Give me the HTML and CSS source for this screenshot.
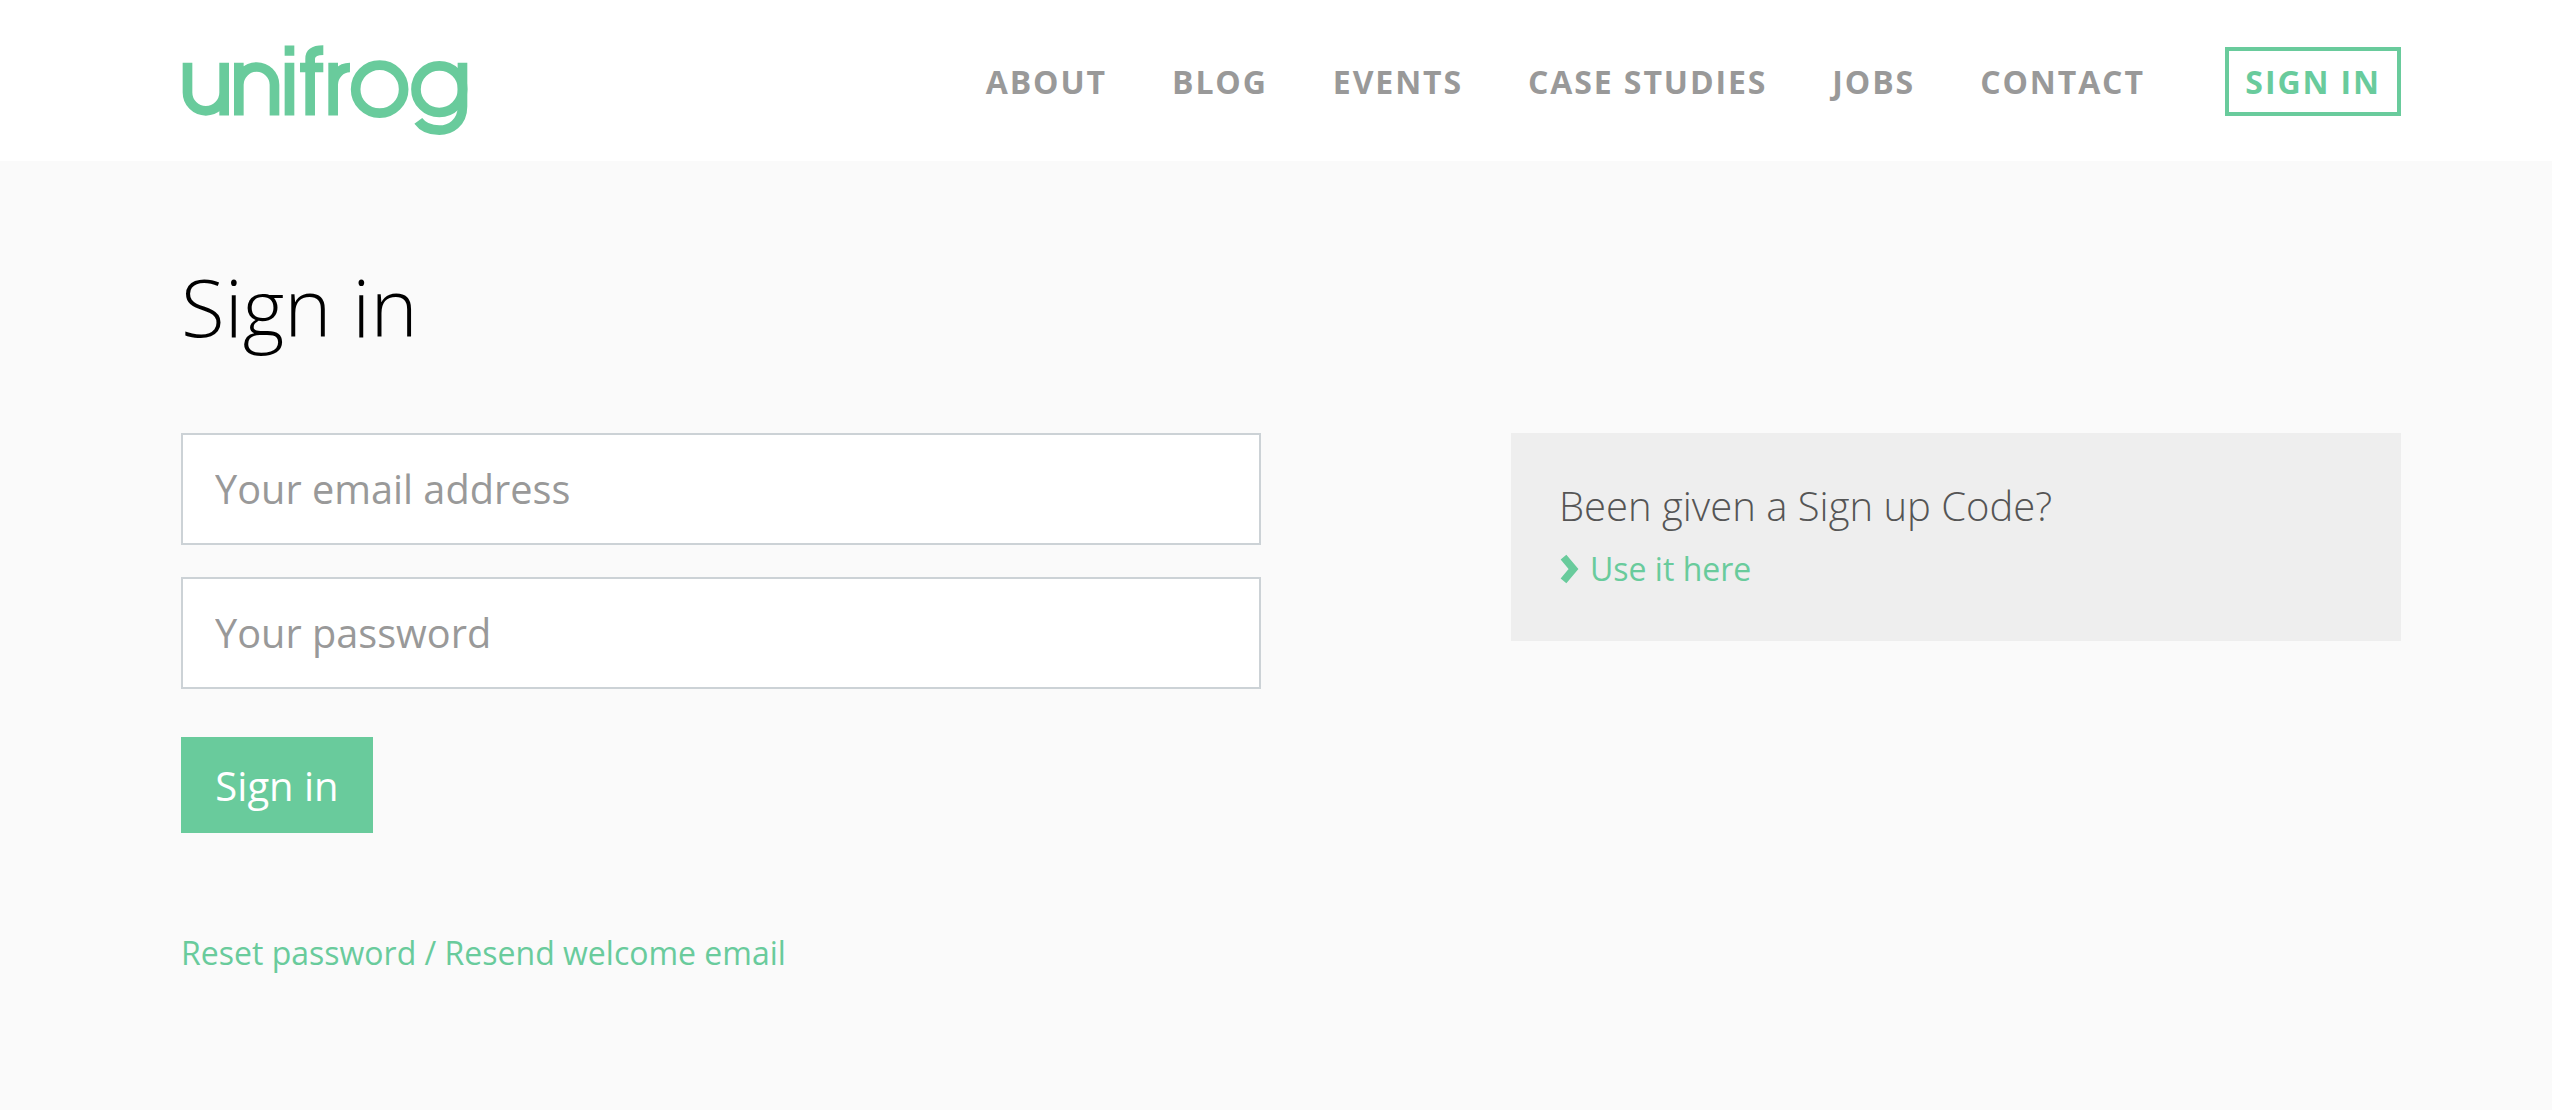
FILE: index.html
```html
<!DOCTYPE html>
<html lang="en">
<head>
<meta charset="utf-8">
<title>Sign in - Unifrog</title>
<link rel="stylesheet" href="styles.css">
</head>
<body>
<header class="site-header">
  <div class="wrap header-row">
    <a class="logo" href="#" aria-label="unifrog">
      <svg class="logo-svg" viewBox="0 0 300 100" role="img" aria-hidden="true">
        <g transform="translate(-21 -12.5) scale(.3333)" class="logo-strokes">
          <path d="M82.5 124V213A55 55 0 0 0 192.500 213M192.500 124V282"/>
          <path d="M236.500 282V124M236.500 190A53.500 53.500 0 0 1 343.500 190V282"/>
          <path d="M388.500 124V282M388.500 72V103"/>
          <path d="M450.500 282V112Q450.500 86 490 86M420 138H490"/>
          <path d="M519.500 282V124M519.500 190A50 52 0 0 1 570 138"/>
          <circle cx="659" cy="203" r="72"/>
          <circle cx="838" cy="203" r="70"/>
          <path d="M907.500 124V255C907.500 305 870 326 838 326C810 326 788 316 775 298"/>
        </g>
      </svg>
    </a>
    <nav class="nav">
      <a class="nav-link" href="#">About</a>
      <a class="nav-link" href="#">Blog</a>
      <a class="nav-link" href="#">Events</a>
      <a class="nav-link" href="#">Case Studies</a>
      <a class="nav-link" href="#">Jobs</a>
      <a class="nav-link" href="#">Contact</a>
      <a class="nav-cta" href="#">Sign in</a>
    </nav>
  </div>
</header>
<main class="wrap main">
  <h1 class="title">Sign in</h1>
  <div class="columns">
    <form class="form">
      <input class="field" type="email" placeholder="Your email address">
      <input class="field" type="password" placeholder="Your password">
      <button class="btn" type="button">Sign in</button>
      <p class="reset"><a href="#">Reset password / Resend welcome email</a></p>
    </form>
    <aside class="panel">
      <h2 class="panel-title">Been given a Sign up Code?</h2>
      <a class="panel-link" href="#">
        <svg class="chev" viewBox="0 0 20 32" aria-hidden="true"><path d="M4.500 4.200L14.500 16L4.500 27.800"/></svg>
        Use it here
      </a>
    </aside>
  </div>
</main>
</body>
</html>
```
FILE: styles.css
```css
* { box-sizing: border-box; }
html, body { margin: 0; }
body {
  background: #fafafa;
  font-family: "Open Sans", "Noto Sans", sans-serif;
  min-height: 1110px;
}
a { text-decoration: none; }
.wrap { width: 2220px; margin-left: 181px; }
.site-header { background: #fff; height: 161px; }
.header-row { display: flex; align-items: center; justify-content: space-between; height: 161px; }
.logo { display: block; width: 300px; height: 100px; margin-top: 6px; }
.logo-svg { display: block; width: 300px; height: 100px; overflow: visible; }
.logo-strokes { fill: none; stroke: #69cb9c; stroke-width: 29; }
.nav { display: flex; align-items: center; margin-top: 2px; }
.nav-link {
  color: #999;
  font-size: 32px;
  font-weight: 700;
  letter-spacing: 1.900px;
  text-transform: uppercase;
  margin-right: 65px;
}
.nav-link:nth-child(6) { margin-right: 80.500px; }
.nav-cta {
  border: 4px solid #69cb9c;
  color: #69cb9c;
  font-size: 32px;
  font-weight: 700;
  letter-spacing: 1.900px;
  text-transform: uppercase;
  padding: 8.500px 16px;
  line-height: 44px;
}
.main { padding-top: 105px; }
.title { color: #000; font-size: 80px; font-weight: 300; line-height: 80px; margin: 0 0 87px; }
.columns { display: flex; justify-content: space-between; align-items: flex-start; }
.form { width: 1080px; }
.field {
  display: block;
  width: 100%;
  height: 112px;
  border: 2px solid #ccd2d6;
  background: #fff;
  padding: 0 32px;
  margin: 0 0 32px;
  border-radius: 0;
  font: 400 39.700px "Open Sans", sans-serif;
  color: #333;
  outline: none;
}
.field::placeholder { color: #999; opacity: 1; }
.btn {
  display: block;
  background: #69cb9c;
  color: #fff;
  border: 0;
  width: 192px;
  height: 96px;
  margin-top: 48px;
  padding: 0;
  font: 400 40px "Open Sans", sans-serif;
}
.reset { margin: 97px 0 0; font-size: 32px; line-height: 46px; }
.reset a, .panel-link { color: #69cb9c; }
.panel { width: 890px; height: 208px; background: #eee; padding: 46px 48px; }
.panel-title { margin: 0; color: #555; font-size: 40px; font-weight: 300; line-height: 54px; }
.panel-link { display: flex; align-items: center; gap: 11px; font-size: 32px; line-height: 46px; margin-top: 13px; }
.chev { width: 20px; height: 32px; }
.chev path { fill: none; stroke: #69cb9c; stroke-width: 7.500; }
```
